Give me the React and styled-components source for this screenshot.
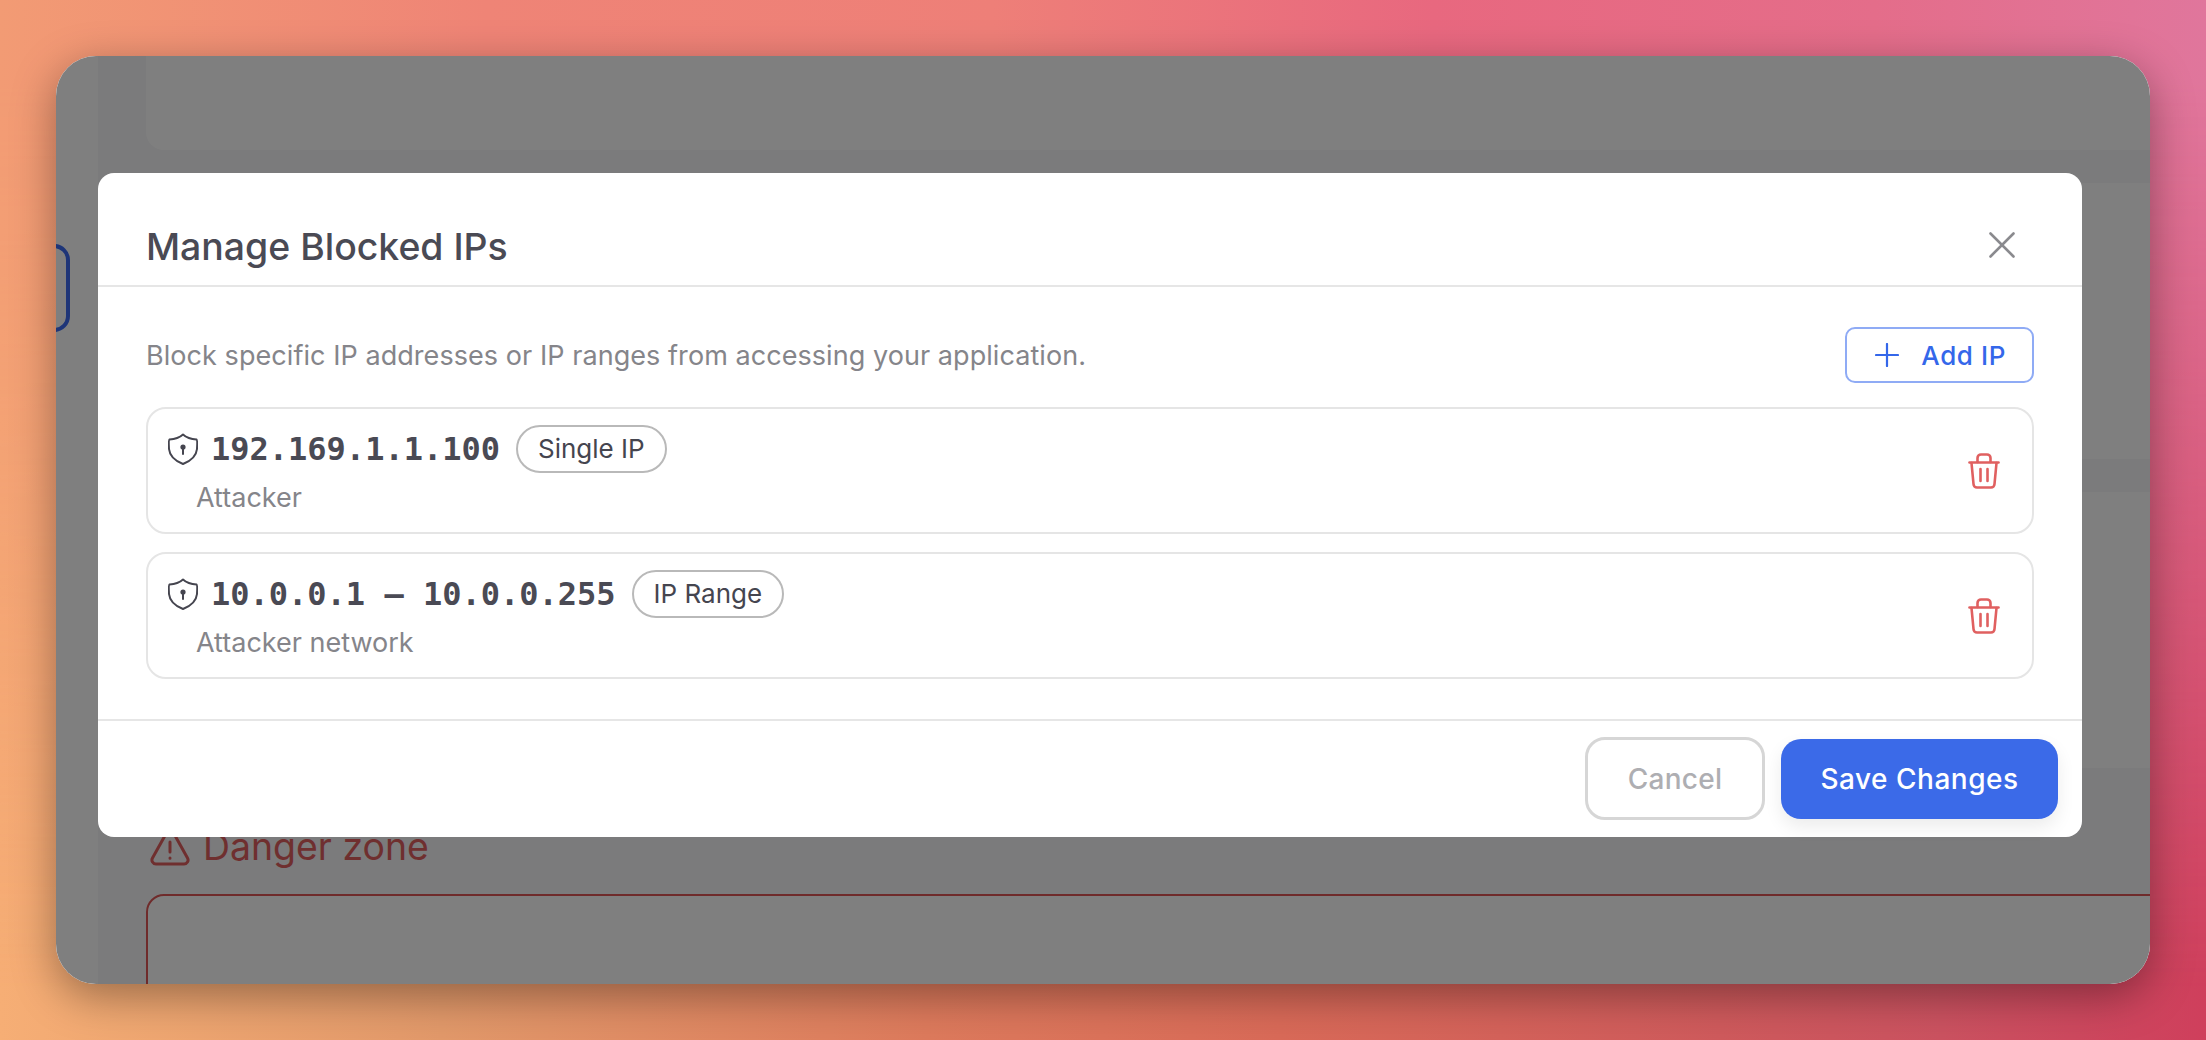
import React from "react";
import styled, { createGlobalStyle } from "styled-components";

const GlobalStyle = createGlobalStyle`
  html, body {
    margin: 0;
    padding: 0;
    height: 100%;
    font-family: "Inter", "Liberation Sans", sans-serif;
  }
  * {
    box-sizing: border-box;
  }
`;

const blockedIps = [
  { id: 1, address: "192.169.1.1.100", kind: "Single IP", note: "Attacker" },
  { id: 2, address: "10.0.0.1 – 10.0.0.255", kind: "IP Range", note: "Attacker network" },
];

const ShieldIcon = () => (
  <svg width="30" height="32" viewBox="0 0 30 32" fill="none" stroke="#45454f" strokeWidth="2" strokeLinejoin="round">
    <path d="M15 1.5Q20 6 28.5 6.5Q29.5 7 29 16Q28 26 15 31Q2 26 1 16Q.5 7 1.5 6.5Q10 6 15 1.5Z" />
    <circle cx="15" cy="14" r="2.6" fill="#45454f" stroke="none" />
    <path d="M15 15V21" strokeLinecap="round" />
  </svg>
);

const TrashIcon = () => (
  <svg width="32" height="36" viewBox="0 0 32 36" fill="none" stroke="#e06060" strokeWidth="2.6" strokeLinecap="round" strokeLinejoin="round">
    <path d="M1.5 9.5H30.5" />
    <path d="M9.5 9V5a3.5 3.5 0 0 1 3.5-3.5h6A3.5 3.5 0 0 1 22.5 5v4" />
    <path d="M3.5 10l2 21a3.5 3.5 0 0 0 3.5 3.5h14a3.5 3.5 0 0 0 3.5-3.5l2-21" />
    <path d="M12.5 16V28M19.5 16V28" />
  </svg>
);

const CloseIcon = () => (
  <svg width="26" height="26" viewBox="0 0 26 26" fill="none" stroke="#8a8a8e" strokeWidth="2.6" strokeLinecap="round">
    <path d="M1.5 1.5L24.5 24.5M24.5 1.5L1.5 24.5" />
  </svg>
);

const PlusIcon = () => (
  <svg width="24" height="24" viewBox="0 0 24 24" fill="none" stroke="#3467ea" strokeWidth="2.2" strokeLinecap="round">
    <path d="M12 1V23M1 12H23" />
  </svg>
);

const WarningIcon = () => (
  <svg width="40" height="38" viewBox="0 0 40 38" fill="none" stroke="#df5f5f" strokeWidth="3" strokeLinecap="round" strokeLinejoin="round">
    <path d="M17 4L2.5 30a4 4 0 0 0 3.5 6h28a4 4 0 0 0 3.5-6L23 4a3.4 3.4 0 0 0-6 0Z" />
    <path d="M20 14V24M20 30V30.2" />
  </svg>
);

const App = () => {
  return (
    <Desktop>
      <GlobalStyle />
      <Window>
        <Sidebar>
          <SideItem />
        </Sidebar>
        <Main>
          <TopPanel>
            <CutOffGlyph />
          </TopPanel>
          <Panel />
          <Panel />
          <DangerTitle>
            <WarningIcon />
            Danger zone
          </DangerTitle>
          <DangerBox />
        </Main>
        <Backdrop>
          <Modal>
            <ModalHeader>
              <Title>Manage Blocked IPs</Title>
              <IconButton aria-label="Close">
                <CloseIcon />
              </IconButton>
            </ModalHeader>
            <ModalBody>
              <IntroRow>
                <Intro>Block specific IP addresses or IP ranges from accessing your application.</Intro>
                <AddButton>
                  <PlusIcon />
                  Add IP
                </AddButton>
              </IntroRow>
              <IpList>
                {blockedIps.map((ip) => (
                  <IpCard key={ip.id}>
                    <IpInfo>
                      <IpLine>
                        <ShieldIcon />
                        <Address>{ip.address}</Address>
                        <Badge>{ip.kind}</Badge>
                      </IpLine>
                      <Note>{ip.note}</Note>
                    </IpInfo>
                    <IconButton aria-label="Delete">
                      <TrashIcon />
                    </IconButton>
                  </IpCard>
                ))}
              </IpList>
            </ModalBody>
            <ModalFooter>
              <CancelButton>Cancel</CancelButton>
              <SaveButton>Save Changes</SaveButton>
            </ModalFooter>
          </Modal>
        </Backdrop>
      </Window>
    </Desktop>
  );
};

const Desktop = styled.div`
  position: relative;
  height: 1040px;
  padding: 56px;
  overflow: hidden;
  background: linear-gradient(
    90deg,
    #f6ae75 0%,
    #e2996a 20%,
    #dd7a5c 42%,
    #d96a58 58%,
    #cf5a5c 78%,
    #cb5260 88%,
    #cf3f5c 100%
  );

  &::before {
    content: "";
    position: absolute;
    inset: 0;
    background: linear-gradient(
      90deg,
      #f29b74 0%,
      #ef8476 22%,
      #ee7f78 45%,
      #e8687f 65%,
      #e46d8a 85%,
      #e0769c 100%
    );
    mask-image: linear-gradient(to bottom, #000 8%, transparent 95%);
  }
`;

const Window = styled.div`
  position: relative;
  display: flex;
  height: 928px;
  border-radius: 40px;
  overflow: hidden;
  background: #f6f6f8;
  box-shadow: 0 12px 44px rgba(0, 0, 0, 0.36);
`;

const Sidebar = styled.div`
  flex: 0 0 42px;
  padding-top: 188px;
  background: #fff;
`;

const SideItem = styled.div`
  width: 54px;
  height: 88px;
  margin-left: -40px;
  border: 4px solid #3c6bf0;
  border-radius: 16px;
`;

const Main = styled.div`
  flex: 1;
  min-width: 0;
  display: flex;
  flex-direction: column;
  gap: 33px;
  margin-top: -30px;
  padding-left: 48px;
`;

const Panel = styled.div`
  flex: 0 0 auto;
  height: 276px;
  margin-right: -40px;
  border-radius: 18px;
  background: #fff;
`;

const TopPanel = styled(Panel)`
  position: relative;
  height: 124px;
`;

const CutOffGlyph = styled.span`
  position: absolute;
  top: 27px;
  left: 178px;
  width: 10px;
  height: 3px;
  border-radius: 0 0 5px 5px;
  background: #6a6a70;
`;

const DangerTitle = styled.h2`
  flex: 0 0 auto;
  display: flex;
  align-items: center;
  gap: 13px;
  margin: 24px 0 -8px 4px;
  font-size: 37.4px;
  line-height: 44px;
  font-weight: 400;
  color: #df5f5f;
`;

const DangerBox = styled.div`
  flex: 0 0 auto;
  height: 200px;
  margin-right: -40px;
  border: 2px solid #df5757;
  border-radius: 18px;
  background: #fff;
`;

const Backdrop = styled.div`
  position: absolute;
  inset: 0;
  padding: 117px 68px 0 42px;
  background: rgba(0, 0, 0, 0.5);
`;

const Modal = styled.div`
  height: 664px;
  border-radius: 16px;
  background: #fff;
  color: #45454f;
`;

const ModalHeader = styled.div`
  display: flex;
  align-items: flex-start;
  justify-content: space-between;
  height: 114px;
  padding: 59px 67px 0 48px;
  border-bottom: 2px solid #e6e6e6;
`;

const Title = styled.h1`
  margin: -5px 0 0;
  font-size: 37.4px;
  line-height: 40px;
  font-weight: 500;
  color: #4a4a54;
`;

const IconButton = styled.button`
  display: flex;
  padding: 0;
  border: 0;
  background: none;
`;

const ModalBody = styled.div`
  padding: 40px 48px 40px 48px;
  border-bottom: 2px solid #e6e6e6;
`;

const IntroRow = styled.div`
  display: flex;
  align-items: center;
  justify-content: space-between;
  margin-bottom: 24px;
`;

const Intro = styled.p`
  margin: 1px 0 0;
  font-size: 27px;
  letter-spacing: 0.06px;
  line-height: 40px;
  color: #85858a;
`;

const AddButton = styled.button`
  display: flex;
  align-items: center;
  gap: 22px;
  height: 56px;
  padding: 0 26px 0 28px;
  border: 2px solid #8fabf5;
  border-radius: 10px;
  background: #fff;
  font-family: inherit;
  font-size: 26px;
  letter-spacing: 0.6px;
  font-weight: 500;
  color: #3467ea;
`;

const IpList = styled.div`
  display: flex;
  flex-direction: column;
  gap: 18px;
`;

const IpCard = styled.div`
  display: flex;
  align-items: center;
  justify-content: space-between;
  height: 127px;
  padding: 0 32px 0 20px;
  border: 2px solid #e5e5e5;
  border-radius: 20px;
`;

const IpInfo = styled.div`
  display: flex;
  flex-direction: column;
  gap: 8px;
  margin-top: -2px;
`;

const IpLine = styled.div`
  display: flex;
  align-items: center;
  gap: 13px;
`;

const Address = styled.span`
  font-family: "DejaVu Sans Mono", "Liberation Mono", monospace;
  font-size: 32px;
  line-height: 48px;
  font-weight: 700;
  color: #4a4a54;
`;

const Badge = styled.span`
  display: flex;
  align-items: center;
  height: 48px;
  margin-left: 3px;
  padding: 0 20px;
  border: 2px solid #b9b9b9;
  border-radius: 24px;
  font-size: 26px;
  font-weight: 400;
  color: #45454f;
`;

const Note = styled.span`
  margin-left: 28px;
  font-size: 27px;
  line-height: 34px;
  color: #85858a;
`;

const ModalFooter = styled.div`
  display: flex;
  justify-content: flex-end;
  align-items: center;
  gap: 16px;
  height: 115px;
  padding: 0 24px 0 0;
`;

const CancelButton = styled.button`
  width: 180px;
  height: 83px;
  border: 3px solid #d6d6d6;
  border-radius: 20px;
  background: #fff;
  font-family: inherit;
  font-size: 28px;
  letter-spacing: 0.3px;
  font-weight: 500;
  color: #aeaeb2;
`;

const SaveButton = styled.button`
  width: 277px;
  height: 80px;
  border: 0;
  border-radius: 20px;
  background: #3b6ae8;
  box-shadow: 0 8px 18px rgba(0, 0, 0, 0.08);
  font-family: inherit;
  font-size: 28px;
  letter-spacing: 0.5px;
  font-weight: 500;
  color: #fff;
`;

export default App;
